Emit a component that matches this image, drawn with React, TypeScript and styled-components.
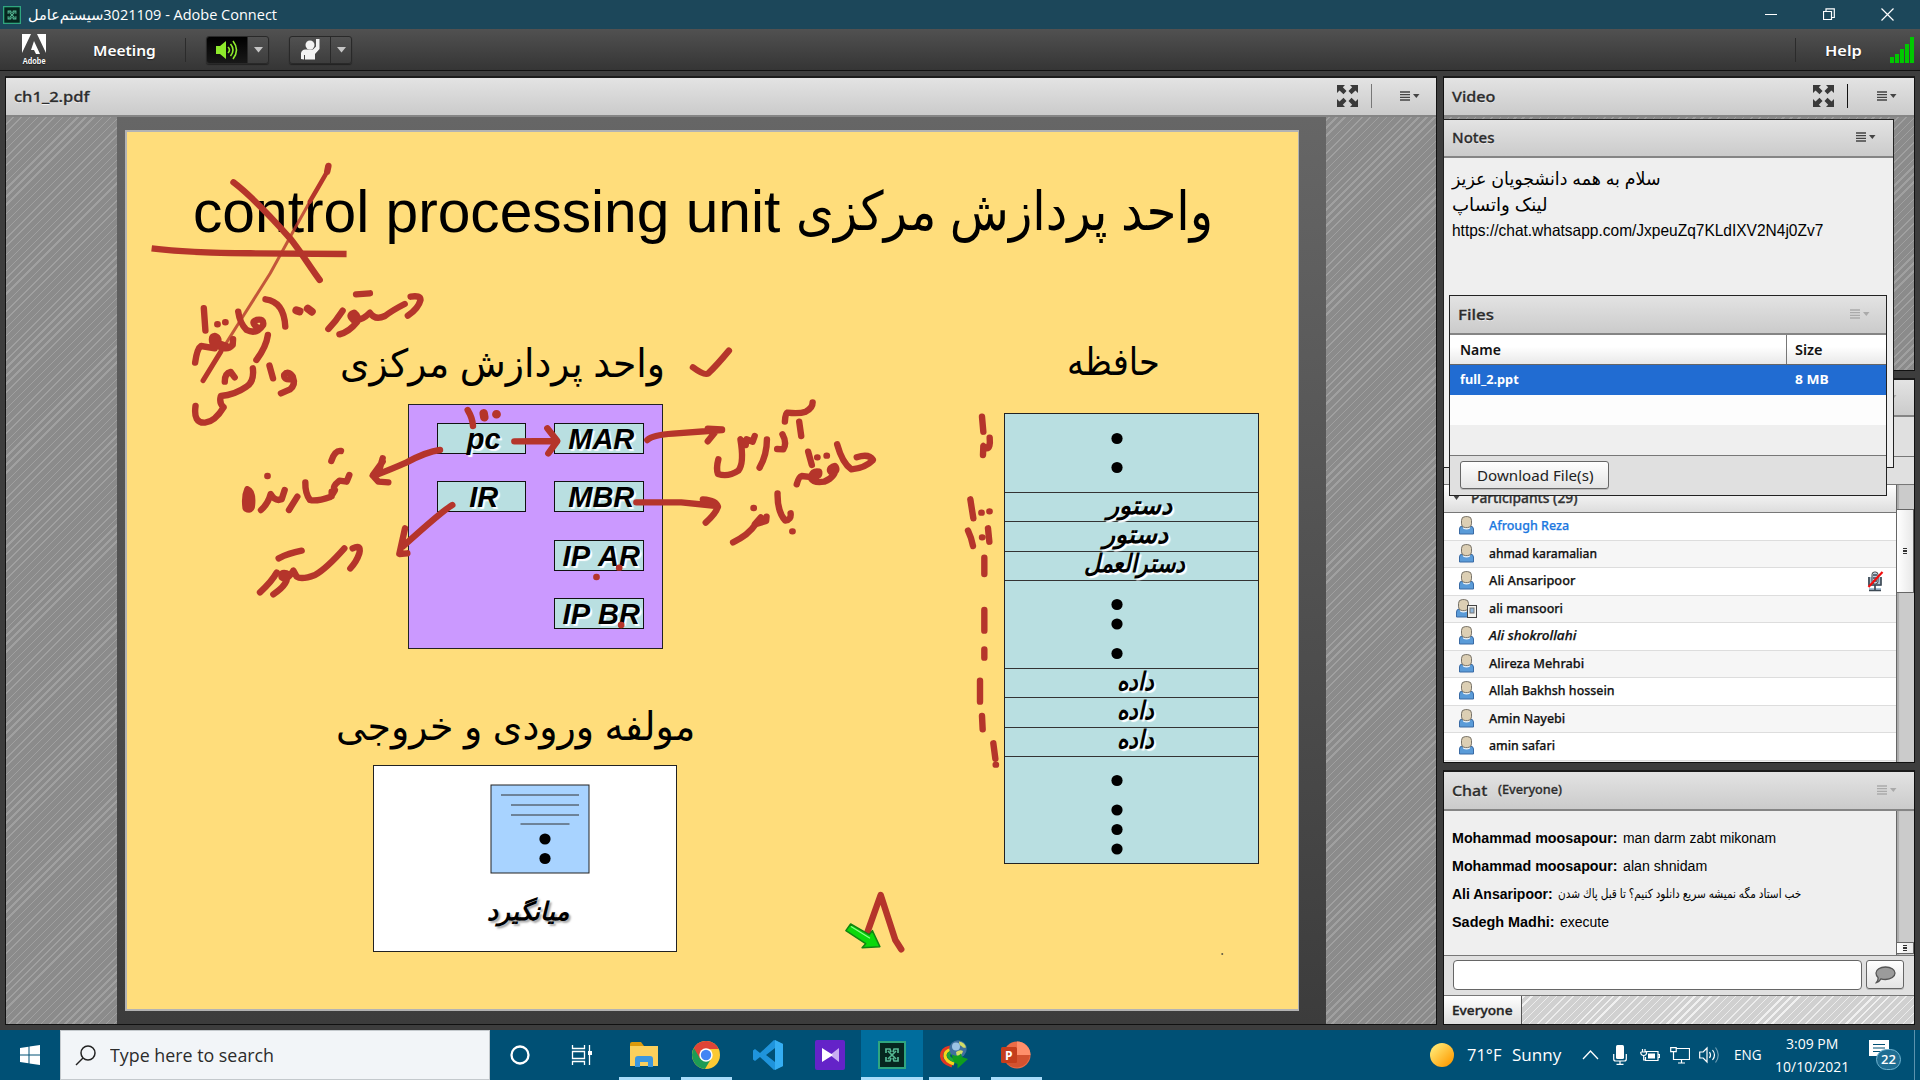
import React, { useLayoutEffect, useRef, useState } from "react";
import styled, { createGlobalStyle, css } from "styled-components";

const ui = `"Noto Sans", "Open Sans", "DejaVu Sans", sans-serif`;
const segoe = `"Open Sans", "Noto Sans", "DejaVu Sans", sans-serif`;
const arial = `"Liberation Sans", "DejaVu Sans", sans-serif`;

const GlobalStyle = createGlobalStyle`
  * { box-sizing: border-box; }
  body { margin: 0; overflow: hidden; background: #3d3d3d; font-family: ${ui}; }
  svg { display: block; flex: none; }
`;

/* ---------- text that fills a known measure ---------- */
const FitBox = styled.span<{ $w: number }>`
  display: block;
  flex: none;
  width: ${(p) => p.$w}px;
  white-space: nowrap;
`;
const FitInner = styled.span`
  display: inline-block;
  transform-origin: 0 50%;
  white-space: pre;
`;
function Fit({ w, children }: { w: number; children: React.ReactNode }) {
  const ref = useRef<HTMLSpanElement>(null);
  const [k, setK] = useState(1);
  useLayoutEffect(() => {
    if (ref.current) setK(w / ref.current.offsetWidth);
  }, [w]);
  return (
    <FitBox $w={w} dir="ltr">
      <FitInner ref={ref} style={{ transform: `scaleX(${k})` }}>
        {children}
      </FitInner>
    </FitBox>
  );
}

/* diagonal hatch: a run of thin lines, then a group of thick ones */
const hatch = (base: string, thin: string, thick: string) => {
  const parts: string[] = [];
  let at = 0;
  for (let i = 0; i < 11; i++) {
    const w = i > 7 ? 2 : 1;
    const gap = i > 7 ? 3.6 : 4.8;
    parts.push(`${base} ${at}px ${at + gap}px`);
    parts.push(`${i > 7 ? thick : thin} ${at + gap}px ${at + gap + w}px`);
    at += gap + w;
  }
  return `repeating-linear-gradient(135deg, ${parts.join(", ")})`;
};

/* ---------- shell ---------- */
const Screen = styled.div`
  width: 1920px;
  height: 1080px;
  display: flex;
  flex-direction: column;
  overflow: hidden;
  background: #3d3d3d;
`;
const TitleBar = styled.header`
  height: 29px;
  flex: none;
  display: flex;
  align-items: center;
  background: #1c475a;
  color: #fff;
  font: 14.5px/29px ${segoe};
  padding: 0 0 0 3px;
  gap: 7px;
`;
const WindowButtons = styled.div`
  margin-left: auto;
  display: flex;
  gap: 46px;
  padding-right: 26px;
  align-items: center;
`;
const Toolbar = styled.nav`
  height: 42px;
  flex: none;
  display: flex;
  align-items: center;
  background: linear-gradient(#515151, #353535);
  border-bottom: 1px solid #111;
  color: #fff;
  font: 600 15px/40px ${ui};
  padding: 0 6px 0 22px;
  text-shadow: 0 1px 1px #222;
`;
const Rule = styled.i<{ $ml?: number; $h?: number; $c?: string }>`
  width: 1px;
  flex: none;
  height: ${(p) => p.$h ?? 24}px;
  margin-left: ${(p) => p.$ml ?? 0}px;
  background: ${(p) => p.$c ?? "#2b2b2b"};
`;
const Space = styled.i<{ $w: number }>`
  flex: none;
  width: ${(p) => p.$w}px;
`;
const Spring = styled.i`
  flex: 1;
`;
const Split = styled.div<{ $on?: boolean }>`
  display: flex;
  width: 63px;
  height: 28px;
  border: 1px solid #292929;
  border-radius: 3px;
  background: linear-gradient(#515151, #3d3d3d);
  box-shadow: 0 1px 1px #222;
  overflow: hidden;
  & > span {
    display: flex;
    align-items: center;
    justify-content: center;
  }
  & > span:first-child {
    width: 41px;
    background: ${(p) => (p.$on ? "linear-gradient(#000, #181818)" : "none")};
    border-right: 1px solid #292929;
  }
  & > span:last-child {
    flex: 1;
  }
`;

const Workspace = styled.main`
  flex: 1;
  min-height: 0;
  display: flex;
  gap: 6px;
  padding: 5px 5px 5px 5px;
`;
const stripes = css`
  background: ${hatch("#8b8b8b", "#a0a0a0", "#a0a0a0")};
`;
const Panel = styled.section<{ $w?: number; $h?: number }>`
  ${(p) => (p.$w ? `width: ${p.$w}px;` : "")}
  ${(p) => (p.$h ? `height: ${p.$h}px;` : "")}
  flex: none;
  display: flex;
  flex-direction: column;
  border: 1px solid #111;
  border-top: 2px solid #1b1b1b;
  overflow: hidden;
`;
const Head = styled.div<{ $h?: number; $pr?: number }>`
  height: ${(p) => p.$h ?? 39}px;
  flex: none;
  display: flex;
  align-items: center;
  padding: 0 ${(p) => p.$pr ?? 15}px 2px 8px;
  background: linear-gradient(#e3e3e3, #cbcbcb);
  border-bottom: 2px solid #858585;
  color: #2c2c2c;
  font: 500 15px/24px ${ui};
  -webkit-text-stroke: 0.3px #2c2c2c;
  text-shadow: 0 1px 0 #f4f4f4;
`;
const Sub = styled.span`
  font-size: 12.5px;
`;
const Stage = styled.div`
  flex: 1;
  display: flex;
  justify-content: center;
  ${stripes}
`;
const Viewer = styled.div`
  width: 1209px;
  padding: 13px 0 0 8px;
  background: linear-gradient(#666, #3c3c3c);
`;
const Slide = styled.div`
  position: relative;
  width: 1174px;
  height: 881px;
  border: 2px solid #b3b3b3;
  border-right-width: 1px;
  background: #ffdd7b;
  overflow: hidden;
`;
/* slide canvas: coordinates run from the slide's inner corner */
const OX = 127;
const OY = 132;

const Label = styled.div<{ $x: number; $y: number; $s: number; $b?: boolean; $shadow?: string }>`
  position: absolute;
  left: ${(p) => p.$x - OX}px;
  top: ${(p) => p.$y - OY - p.$s * 0.8465}px;
  font: ${(p) => (p.$b ? "italic bold" : "normal")} ${(p) => p.$s}px/1 ${arial};
  color: #000;
  text-shadow: ${(p) => p.$shadow ?? "none"};
`;
const CpuBox = styled.div`
  position: absolute;
  left: ${408 - OX}px;
  top: ${403.5 - OY}px;
  width: 255px;
  height: 245px;
  padding: 18px 18px 0 28px;
  display: flex;
  justify-content: space-between;
  background: #cb99ff;
  border: 1px solid #222;
`;
const RegColumn = styled.div`
  display: flex;
  flex-direction: column;
  gap: 27.6px;
`;
const Register = styled.div`
  width: 89.5px;
  height: 31px;
  border: 1px solid #111;
  background: #b9dfe1;
  display: flex;
  justify-content: center;
  font: italic bold 29px/30px ${arial};
  text-shadow: 2px 2px 1px #fff;
  padding-left: 5px;
`;
const Memory = styled.div`
  position: absolute;
  left: ${1004 - OX}px;
  top: ${413 - OY}px;
  width: 255.5px;
  height: 451px;
  display: flex;
  flex-direction: column;
  border: 1px solid #222;
  background: #b9dfe1;
`;
const Cell = styled.div<{ $h: number }>`
  height: ${(p) => p.$h}px;
  flex: none;
  border-bottom: 1px solid #333;
  &:last-child {
    border-bottom: 0;
  }
`;
const IoBox = styled.div`
  position: absolute;
  left: ${373.5 - OX}px;
  top: ${765 - OY}px;
  width: 304px;
  height: 187px;
  border: 1px solid #222;
  background: #fff;
`;
const Ink = styled.svg`
  position: absolute;
  inset: 0;
  fill: none;
  stroke: #b5352b;
  stroke-width: 6.4;
  stroke-linecap: round;
  stroke-linejoin: round;
  path {
    vector-effect: non-scaling-stroke;
  }
`;

/* ---------- right column ---------- */
const Side = styled.aside`
  position: relative;
  flex: 1;
  display: flex;
  flex-direction: column;
  gap: 7px;
`;
const Fill = styled.div`
  flex: 1;
  ${stripes}
`;
const Floating = styled.div<{ $x: number; $y: number; $w: number; $h: number }>`
  position: absolute;
  left: ${(p) => p.$x}px;
  top: ${(p) => p.$y}px;
  width: ${(p) => p.$w}px;
  height: ${(p) => p.$h}px;
  display: flex;
  flex-direction: column;
  border: 1px solid #222;
  background: #efefef;
`;
const NoteText = styled.div`
  padding: 8px 8px;
  color: #000;
  font: 18px/26px ${arial};
  & > :last-child {
    font-size: 16.5px;
    line-height: 25px;
  }
`;
const FileHead = styled.div`
  display: flex;
  height: 30px;
  flex: none;
  background: linear-gradient(#fff 40%, #e9e9e9);
  border-bottom: 1px solid #666;
  font: 600 14px/29px ${ui};
  color: #111;
`;
const FileRow = styled.div<{ $bg: string }>`
  display: flex;
  height: 30px;
  flex: none;
  background: ${(p) => p.$bg};
  color: #fff;
  font: bold 13px/28px ${ui};
`;
const NameCol = styled.div`
  width: 337px;
  padding-left: 10px;
  border-right: 1px solid #777;
  ${FileRow} & {
    border-color: transparent;
  }
`;
const SizeCol = styled.div`
  padding-left: 8px;
`;
const FileFoot = styled.div`
  flex: 1;
  display: flex;
  padding: 5px 0 0 10px;
  background: #e0e0e0;
  border-top: 1px solid #777;
`;
const Button = styled.div<{ $w: number; $h: number }>`
  width: ${(p) => p.$w}px;
  height: ${(p) => p.$h}px;
  flex: none;
  border: 1px solid #666;
  border-radius: 3px;
  background: linear-gradient(#fff, #e4e4e4);
  box-shadow: 0 1px 0 #bbb;
  display: flex;
  align-items: center;
  justify-content: center;
  font: 15px/26px ${ui};
  color: #222;
`;
const Body = styled.div`
  flex: 1;
  min-height: 0;
  display: flex;
  background: #efefef;
`;
const Main = styled.div`
  width: 452px;
  flex: none;
`;
const Scroll = styled.div<{ $pt: number }>`
  flex: 1;
  padding-top: ${(p) => p.$pt}px;
  background: #cbcbcb;
  border-left: 1px solid #666;
  box-shadow: inset 2px 0 1px #aaa;
`;
const Thumb = styled.div<{ $h: number }>`
  height: ${(p) => p.$h}px;
  background: linear-gradient(90deg, #fff, #e8e8e8);
  border: 1px solid #666;
  border-left: 0;
  display: flex;
  flex-direction: column;
  gap: 1px;
  align-items: center;
  justify-content: center;
  i {
    width: 4px;
    height: 1.5px;
    background: #333;
  }
`;
const Status = styled.div<{ $h: number }>`
  height: ${(p) => p.$h}px;
  flex: none;
  background: #e0e0e0;
  border-bottom: 1px solid #777;
`;
const GroupHead = styled.div`
  height: 28px;
  display: flex;
  align-items: center;
  gap: 11px;
  padding: 0 0 2px 9px;
  background: linear-gradient(#fff, #ddd);
  border-bottom: 1px solid #777;
  font: 500 13.5px/24px ${ui};
  -webkit-text-stroke: 0.3px #333;
  color: #333;
`;
const Person = styled.div<{ $alt: boolean; $self?: boolean; $it?: boolean }>`
  height: 27.5px;
  display: flex;
  align-items: center;
  padding: 0 12px 0 12px;
  border-bottom: 1px solid #ddd;
  background: ${(p) => (p.$alt ? "#f6f6f6" : "#fff")};
  color: ${(p) => (p.$self ? "#1c78e0" : "#111")};
  font: ${(p) => (p.$it ? "italic" : "normal")} 500 12.5px/26px ${ui};
  -webkit-text-stroke: 0.25px currentColor;
  & > svg {
    margin-left: auto;
  }
`;
const Avatar = styled.span`
  width: 33px;
  flex: none;
`;
const Message = styled.p`
  margin: 0;
  height: 28px;
  display: flex;
  gap: 5px;
  font: 14px/28px ${arial};
  color: #000;
`;
const Small = styled.span`
  font-size: 12.5px;
`;
const Messages = styled.div`
  width: 452px;
  flex: none;
  padding: 13px 0 0 8px;
`;
const Compose = styled.div`
  height: 40px;
  flex: none;
  display: flex;
  gap: 4px;
  padding: 4px 0 0 9px;
  background: #e0e0e0;
  border-top: 1px solid #777;
`;
const Field = styled.div`
  width: 409px;
  height: 30px;
  border: 1px solid #666;
  border-radius: 4px;
  background: #fff;
`;
const Tabs = styled.div`
  height: 29px;
  flex: none;
  display: flex;
  border-top: 1px solid #777;
  background: ${hatch("#d0d0d0", "#ececec", "#f0f0f0")};
`;
const Tab = styled.div`
  width: 78px;
  padding-left: 8px;
  background: linear-gradient(#fff, #ddd);
  border-right: 1px solid #555;
  font: 500 13px/28px ${ui};
  -webkit-text-stroke: 0.35px #222;
  color: #222;
`;

/* ---------- taskbar ---------- */
const Taskbar = styled.footer`
  height: 50px;
  flex: none;
  display: flex;
  align-items: stretch;
  background: #005075;
  color: #fff;
  font: 16px/50px ${segoe};
`;
const Start = styled.div`
  width: 60px;
  display: flex;
  align-items: center;
  justify-content: center;
`;
const Search = styled.div`
  width: 430px;
  display: flex;
  align-items: center;
  gap: 14px;
  padding-left: 14px;
  background: #f2f5f8;
  border: 1px solid #c4c9cd;
  color: #2b2b2b;
  font: 17.5px/46px ${segoe};
`;
const Apps = styled.div`
  display: flex;
  margin-left: -1px;
`;
const TaskApp = styled.div<{ $open?: boolean; $active?: boolean }>`
  width: 62px;
  display: flex;
  align-items: center;
  justify-content: center;
  position: relative;
  background: ${(p) => (p.$active ? "#006d9d" : "none")};
  &::after {
    content: "";
    position: absolute;
    bottom: 0;
    left: ${(p) => (p.$active ? 0 : 6)}px;
    right: ${(p) => (p.$active ? 0 : 5)}px;
    height: ${(p) => (p.$open ? 3 : 0)}px;
    background: #a8dcfa;
  }
`;
const Tray = styled.div`
  margin-left: auto;
  display: flex;
  align-items: center;
  width: 490px;
`;
const Lang = styled.span`
  font-size: 14px;
`;
const Clock = styled.div`
  display: flex;
  flex-direction: column;
  align-items: center;
  width: 74px;
  font: 14px/23px ${segoe};
`;
const Notice = styled.div`
  position: relative;
  width: 34px;
  height: 30px;
`;
const Badge = styled.b`
  position: absolute;
  left: 7px;
  top: 9px;
  width: 25px;
  height: 21px;
  border: 1px solid #6fb4d2;
  border-radius: 11px;
  background: #1f6d92;
  font: 600 13px/18px ${segoe};
  text-align: center;
`;

/* ---------- icons ---------- */
const ConnectIcon = ({ s }: { s: number }) => (
  <svg width={s} height={s} viewBox="0 0 28 28">
    <rect x="1" y="1" width="26" height="26" fill="#06261f" stroke="#2fa67f" strokeWidth="2" />
    <g fill="none" stroke="#55b894" strokeWidth="1.7">
      <path d="M10 10l8 8M18 10l-8 8" />
      <path d="M8 12V8h4l1 3M20 12V8h-4l-1 3M8 16v4h4l1-3M20 16v4h-4l-1-3" />
    </g>
  </svg>
);
const Caret = () => (
  <svg width="9" height="6">
    <path d="M0 0h9L4.5 5.5z" fill="#c6c6c6" />
  </svg>
);
const MenuIcon = ({ dim }: { dim?: boolean }) => (
  <svg width="20" height="10" viewBox="0 0 20 10">
    <path d="M0 1h10M0 3.700h10M0 6.400h10M0 9h10" stroke={dim ? "#aaa" : "#444"} strokeWidth="1.3" />
    <path d="M13 3h6.500l-3.200 4z" fill={dim ? "#aaa" : "#444"} />
  </svg>
);
const Corner = "M0 0H8L5.800 2.200L9.500 6L6.500 9.300L2.500 5.500L0 8Z";
const ExpandIcon = () => (
  <svg width="21" height="22" viewBox="0 0 21 22">
    <g fill="#3a3a3a">
      <path d={Corner} />
      <path d={Corner} transform="translate(21 0) scale(-1 1)" />
      <path d={Corner} transform="translate(0 22) scale(1 -1)" />
      <path d={Corner} transform="translate(21 22) scale(-1 -1)" />
    </g>
  </svg>
);
const PersonIcon = ({ device }: { device?: boolean }) => (
  <svg width={device ? 23 : 20} height="20" viewBox={device ? "0 0 23 20" : "-3 0 20 20"}>
    <path d="M.5 18v-5q0-3 3-3h7q4 0 4 3v5z" fill="#5a9bd8" stroke="#3a6ba5" />
    <path d="M4 9.500h7v3q-3.500 2-7 0z" fill="#eef4fa" />
    <rect x="2.500" y="0.600" width="10" height="11" rx="3.800" fill="#dccfb4" stroke="#777268" />
    {device && (
      <g>
        <rect x="11.500" y="6.500" width="9" height="12" fill="#f2f2ee" stroke="#444" />
        <rect x="14" y="9" width="4" height="5" fill="#8fb6da" stroke="#777" />
      </g>
    )}
  </svg>
);
const MicOff = () => (
  <svg width="17" height="21" viewBox="0 0 17 21">
    <path d="M1 6h13v9H1zM2 17h12v3H2z" fill="#a9c2d6" />
    <rect x="5" y="1" width="6" height="12" rx="2.500" fill="#c2d3e0" stroke="#444" />
    <path d="M2 6v8h12V6M8 14v5M2 19.500h12M6 4h4M6 7h4M6 10h4" fill="none" stroke="#3e4a55" strokeWidth="1.700" />
    <path d="M1.500 16L15.500 1" stroke="#f20d0d" strokeWidth="2.200" />
  </svg>
);

const people: { n: string; w: number; self?: boolean; it?: boolean; dev?: boolean; mute?: boolean }[] = [
  { n: "Afrough Reza", w: 80, self: true },
  { n: "ahmad karamalian", w: 108 },
  { n: "Ali Ansaripoor", w: 86, mute: true },
  { n: "ali mansoori", w: 74, dev: true },
  { n: "Ali shokrollahi", w: 87, it: true },
  { n: "Alireza Mehrabi", w: 95 },
  { n: "Allah Bakhsh hossein", w: 126 },
  { n: "Amin Nayebi", w: 76 },
  { n: "amin safari", w: 66 },
];
const white = "2px 2px 1px #fff";
const memoryDots = [438.5, 467.5, 604.5, 624, 653.5, 780.5, 810, 829.5, 849];

const SlideInk = () => (
  <Ink width="1171" height="877" viewBox={`${OX} ${OY} 1171 877`}>
    <g transform="translate(120 130) scale(.3954 .3333)">
      <path d="M287 157C340 205 400 285 430 325C460 370 480 410 505 450" />
      <path d="M527 108L524 125" />
      <path d="M524 125Q505 165 480 215" strokeWidth="4.500" />
      <path d="M480 215L440 300L380 430L300 580L255 665" strokeWidth="3" opacity=".8" />
      <path d="M255 665L210 752" strokeWidth="5" />
      <path d="M80 355Q170 368 330 370L573 372" strokeLinecap="butt" />
      <path d="M735 500Q760 495 760 510Q755 535 728 557" />
      <path d="M720 522Q690 540 670 558Q645 572 632 548Q610 575 590 570Q575 555 592 548Q605 560 600 575Q580 605 555 613" />
      <path d="M563 542Q545 575 527 597M597 493L632 490" />
      <path d="M368 508Q415 515 418 590M212 535L216 602" />
      <path d="M446 541l8 3M475 536l10 9" strokeWidth="8" />
      <path d="M246 583h1M266 577h1" />
      <path d="M299 545Q303 580 320 600Q345 615 362 585Q365 565 345 570Q330 575 345 590" />
      <path d="M374 615Q370 650 345 690" />
      <path d="M190 698Q195 655 205 648L240 655Q225 620 240 618Q255 625 245 645Q270 665 285 645L286 628M238 625V650M250 640L270 648" />
      <path d="M431 748Q415 750 415 735Q425 720 437 740Q445 765 430 778L407 790M378 707L387 745" />
      <path d="M336 715Q340 755 320 770Q290 795 255 798Q250 820 262 832Q240 875 215 878Q185 880 191 828M265 755Q265 730 280 726L290 742" />
      <path d="M1449 712Q1478 738 1488 730Q1510 705 1540 662" />
    </g>
    <g transform="translate(220 390) scale(.33333)">
      <path d="M743 60Q758 85 759 108" />
      <path d="M791 70L793 82M829 73h1" strokeWidth="8.500" />
      <path d="M883 154L1010 153M982 115L1012 153L985 190" />
      <path d="M660 180Q620 185 560 217Q520 235 460 258M488 205L475 250M488 215L458 256L475 275L505 277" />
      <path d="M363 183Q345 180 334 213M142 258h1" />
      <path d="M388 255L380 275L358 272Q335 290 345 300L333 320Q290 335 270 330Q255 310 256 277M335 305V318" />
      <path d="M232 320L207 360M194 300L185 328Q165 335 152 312Q145 340 123 360" />
      <path d="M82 298Q72 320 77 355Q95 365 96 345Q100 305 82 298M84 310V350" />
      <path d="M697 345Q670 360 548 470M555 415L538 492L562 490" />
      <path d="M398 475Q425 462 418 490Q410 515 391 535" />
      <path d="M373 475Q320 535 285 555Q245 570 230 560L220 542Q200 575 185 562Q180 545 200 550Q210 580 160 613" />
      <path d="M170 548Q155 575 120 607M176 505Q205 490 245 482" />
      <path d="M1197 533h1M1129 561h1M1203 705h1" />
    </g>
    <g transform="translate(620 340) scale(.40816 .33333)">
      <path d="M67 300Q80 285 130 281L250 270M250 268L215 266M232 278L215 304" />
      <path d="M40 487L150 487L238 498M203 478Q235 480 240 500Q235 520 210 548M205 485L235 492" />
      <path d="M404 245Q405 220 410 218Q440 222 455 215Q472 205 472 187M439 245L444 288" />
      <path d="M398 283Q410 310 400 328L385 327M360 298Q360 345 342 383" />
      <path d="M330 288L325 305L310 298L308 315L295 298Q305 370 290 392Q265 412 240 402Q235 385 241 358" />
      <path d="M580 352Q610 340 620 360Q600 385 567 388Q545 370 532 313" />
      <path d="M526 378Q508 385 518 398Q535 395 528 380Q530 410 500 425Q475 430 468 415Q470 390 488 395Q490 410 475 412L445 408Q438 410 433 433" />
      <path d="M461 335L470 375M483 352h1M506 347h1" />
      <path d="M386 460Q385 515 405 542Q420 540 418 520M422 574h1M327 504h1" />
      <path d="M359 530L358 543L330 553L345 532L348 545M332 553Q315 585 277 607" />
    </g>
    <g transform="translate(960 400) scale(.33333)">
      <path d="M66 50L70 95M89 113Q92 145 80 145L70 138L69 165" />
      <path d="M31 298L40 355M64 338h1M88 334h1M24 392Q35 415 39 438M66 412h1M84 385L88 425" />
      <path d="M73 473V522M73 630V692M73 748V773M60 842V905M66 948L68 988M100 1030L106 1076M107 1094h1" />
    </g>
    <g transform="translate(320 690) scale(.3954 .33333)">
      <path d="M1385 725L1418 615L1455 750L1470 778" />
      <path
        d="M1342 702L1389 734L1397 722L1416 770L1371 773L1380 761L1330 722Z"
        fill="#0bd80b"
        stroke="#118411"
        strokeWidth="1.500"
      />
      <path d="M1344 710L1390 744" stroke="#8dff8d" strokeWidth="1.200" />
    </g>
    <path d="M1222 954h.5" stroke="#333" strokeWidth="1.500" />
  </Ink>
);

export default function App() {
  return (
    <Screen>
      <GlobalStyle />
      <TitleBar>
        <ConnectIcon s={18} />
        <Fit w={249}>{"سیستم‌عامل\u200e3021109 - Adobe Connect"}</Fit>
        <WindowButtons>
          <svg width="12" height="12"><path d="M0 5.500h12" stroke="#fff" /></svg>
          <svg width="12" height="13">
            <path d="M.5 3.500h8v8h-8zM3 3V.8h8.300v8.700H9" fill="none" stroke="#fff" strokeWidth="1.200" />
          </svg>
          <svg width="13" height="13"><path d="M.5.5l12 12M12.500.5l-12 12" stroke="#fff" strokeWidth="1.200" /></svg>
        </WindowButtons>
      </TitleBar>

      <Toolbar>
        <svg width="24" height="33" viewBox="0 0 24 33" overflow="visible">
          <path d="M0 1h9L0 20zM15 1h9v19zM12 8l6 13h-4l-2-4H9z" fill="#fff" />
          <text x="0.500" y="31" fill="#fff" fontFamily="Liberation Sans" fontWeight="bold" fontSize="8.500" textLength="23" lengthAdjust="spacingAndGlyphs">Adobe</text>
        </svg>
        <Space $w={47} />
        <Fit w={63}>Meeting</Fit>
        <Rule $ml={29} />
        <Space $w={20} />
        <Split $on>
          <span>
            <svg width="22" height="20" viewBox="0 0 22 20">
              <path d="M0 6h4l6-5v18l-6-5H0z" fill="#8eea2c" />
              <path d="M12 7q3 3 0 6M14.500 4q5 6 0 12M17 1q7 9 0 18" fill="none" stroke="#8eea2c" strokeWidth="1.600" />
            </svg>
          </span>
          <span><Caret /></span>
        </Split>
        <Space $w={20} />
        <Split>
          <span>
            <svg width="19" height="21" viewBox="0 0 19 21">
              <circle cx="9" cy="6" r="4.500" fill="#f2f2f2" />
              <path d="M0 20v-6q1-4 5-3.500h7l3-3V0h3.500v10L14 15v5.500H4V16H3v4.500z" fill="#f2f2f2" />
            </svg>
          </span>
          <span><Caret /></span>
        </Split>
        <Spring />
        <Rule />
        <Space $w={29} />
        <Fit w={37}>Help</Fit>
        <Space $w={28} />
        <svg width="24" height="26">
          <path d="M0 20h4v6H0zM5 17h4v9H5zM10 12h4v14h-4zM15 7h4v19h-4zM20 0h4v26h-4z" fill="#00c800" />
        </svg>
      </Toolbar>

      <Workspace>
        <Panel $w={1432}>
          <Head $pr={16}>
            <Fit w={75}>ch1_2.pdf</Fit>
            <Spring />
            <ExpandIcon />
            <Rule $ml={13} $c="#777" />
            <Space $w={28} />
            <MenuIcon />
          </Head>
          <Stage>
            <Viewer>
              <Slide>
                <Label $x={193} $y={232.5} $s={60}><Fit w={587}>control processing unit</Fit></Label>
                <Label $x={796} $y={229.5} $s={54}><Fit w={417}>واحد پردازش مرکزی</Fit></Label>
                <Label $x={340} $y={377} $s={39}><Fit w={325}>واحد پردازش مرکزی</Fit></Label>
                <Label $x={1067} $y={375.5} $s={38}><Fit w={93}>حافظه</Fit></Label>
                <Label $x={336} $y={740} $s={39}><Fit w={359}>مولفه ورودی و خروجی</Fit></Label>
                <CpuBox>
                  <RegColumn>
                    <Register>pc</Register>
                    <Register>IR</Register>
                  </RegColumn>
                  <RegColumn>
                    <Register>MAR</Register>
                    <Register>MBR</Register>
                    <Register>IP&nbsp;AR</Register>
                    <Register>IP&nbsp;BR</Register>
                  </RegColumn>
                </CpuBox>
                <Memory>
                  {[79, 29, 29.5, 29.5, 88, 29, 29.5, 29.5, 106].map((h, i) => (
                    <Cell key={i} $h={h} />
                  ))}
                </Memory>
                <Label $b $x={1107} $y={514} $s={25} $shadow={white}><Fit w={65}>دستور</Fit></Label>
                <Label $b $x={1103} $y={543} $s={25} $shadow={white}><Fit w={65}>دستور</Fit></Label>
                <Label $b $x={1084} $y={572} $s={25} $shadow={white}><Fit w={101}>دسترالعمل</Fit></Label>
                <Label $b $x={1117} $y={690} $s={25} $shadow={white}><Fit w={37}>داده</Fit></Label>
                <Label $b $x={1117} $y={719} $s={25} $shadow={white}><Fit w={37}>داده</Fit></Label>
                <Label $b $x={1117} $y={748} $s={25} $shadow={white}><Fit w={37}>داده</Fit></Label>
                <IoBox>
                  <svg width="302" height="185" viewBox="374.500 766.500 302 185">
                    <rect x="491.500" y="785.500" width="98" height="88" fill="#a8d3ff" stroke="#222" />
                    <path d="M501.500 795.500h78M511.500 805.500h68M511.500 815.500h68M521 824.500h49" stroke="#333" />
                    <circle cx="545.500" cy="839.500" r="5.600" />
                    <circle cx="545.500" cy="859" r="5.600" />
                  </svg>
                </IoBox>
                <Label $b $x={487} $y={920} $s={25} $shadow="2px 2px 2px #aaa"><Fit w={82}>میانگیرد</Fit></Label>
                <Ink width="1171" height="877" viewBox={`${OX} ${OY} 1171 877`}>
                  {memoryDots.map((y) => (
                    <circle key={y} cx="1117" cy={y} r="5.600" fill="#000" stroke="none" />
                  ))}
                </Ink>
                <SlideInk />
              </Slide>
            </Viewer>
          </Stage>
        </Panel>

        <Side>
          <Panel $h={295}>
            <Head $pr={17}>
              <Fit w={43}>Video</Fit>
              <Spring />
              <ExpandIcon />
              <Rule $ml={13} $c="#111" />
              <Space $w={29} />
              <MenuIcon />
            </Head>
            <Fill />
          </Panel>

          <Panel $h={385}>
            <Head $h={37} $pr={17}>
              <Spring />
              <MenuIcon dim />
            </Head>
            <Status $h={40} />
            <Status $h={28} />
            <Body>
              <Main>
                <GroupHead>
                  <svg width="7" height="5"><path d="M0 0h7L3.500 5z" fill="#444" /></svg>
                  <Fit w={106}>Participants (29)</Fit>
                </GroupHead>
                {people.map((p, i) => (
                  <Person key={p.n} $alt={i % 2 === 1} $self={p.self} $it={p.it}>
                    <Avatar><PersonIcon device={p.dev} /></Avatar>
                    <Fit w={p.w}>{p.n}</Fit>
                    {p.mute && <MicOff />}
                  </Person>
                ))}
              </Main>
              <Scroll $pt={24}>
                <Thumb $h={84}><i /><i /><i /></Thumb>
              </Scroll>
            </Body>
          </Panel>

          <Panel $h={255}>
            <Head $pr={17}>
              <Fit w={35}>Chat</Fit>
              <Space $w={11} />
              <Sub><Fit w={64}>(Everyone)</Fit></Sub>
              <Spring />
              <MenuIcon dim />
            </Head>
            <Body>
              <Messages>
                <Message><b><Fit w={166}>Mohammad moosapour:</Fit></b><Fit w={153}>man darm zabt mikonam</Fit></Message>
                <Message><b><Fit w={166}>Mohammad moosapour:</Fit></b><Fit w={84}>alan shnidam</Fit></Message>
                <Message><b><Fit w={101}>Ali Ansaripoor:</Fit></b><Small><Fit w={243}>خب استاد مگه نمیشه سریع دانلود کنیم؟ تا قبل پاك شدن</Fit></Small></Message>
                <Message><b><Fit w={103}>Sadegh Madhi:</Fit></b><Fit w={49}>execute</Fit></Message>
              </Messages>
              <Scroll $pt={131}>
                <Thumb $h={12}><i /><i /><i /></Thumb>
              </Scroll>
            </Body>
            <Compose>
              <Field />
              <Button $w={38} $h={29}>
                <svg width="21" height="18" viewBox="0 0 21 18">
                  <path d="M10.500 1C16 1 20 3.500 20 7s-4 6.500-9.500 6.500q-3 0-4.500-.7Q4 16 1.500 16.500 3.500 14 3 11.500 1 9.500 1 7c0-3.500 4-6 9.500-6z" fill="#9b9b9b" stroke="#555" strokeWidth="1.300" />
                </svg>
              </Button>
            </Compose>
            <Tabs>
              <Tab><Fit w={60}>Everyone</Fit></Tab>
            </Tabs>
          </Panel>

          <Floating $x={0} $y={43} $w={451} $h={349}>
            <Head $h={38} $pr={17}>
              <Fit w={42}>Notes</Fit>
              <Spring />
              <MenuIcon />
            </Head>
            <NoteText>
              <Fit w={209}>سلام به همه دانشجویان عزیز</Fit>
              <Fit w={96}>لینک واتساپ</Fit>
              <Fit w={371}>https://chat.whatsapp.com/JxpeuZq7KLdIXV2N4j0Zv7</Fit>
            </NoteText>
          </Floating>

          <Floating $x={6} $y={219} $w={438} $h={201}>
            <Head $h={39} $pr={16}>
              <Fit w={36}>Files</Fit>
              <Spring />
              <MenuIcon dim />
            </Head>
            <FileHead>
              <NameCol><Fit w={41}>Name</Fit></NameCol>
              <SizeCol><Fit w={28}>Size</Fit></SizeCol>
            </FileHead>
            <FileRow $bg="#216cd2">
              <NameCol><Fit w={59}>full_2.ppt</Fit></NameCol>
              <SizeCol><Fit w={34}>8 MB</Fit></SizeCol>
            </FileRow>
            <FileRow $bg="#fdfdfd" />
            <FileRow $bg="#efefef" />
            <FileFoot>
              <Button $w={149} $h={28}><Fit w={116}>Download File(s)</Fit></Button>
            </FileFoot>
          </Floating>
        </Side>
      </Workspace>

      <Taskbar>
        <Start>
          <svg width="20" height="20"><path d="M0 3l8.500-1.200v7.700H0zM9.500 1.600L20 0v9.500H9.500zM0 10.500h8.500v7.700L0 17zM9.500 10.500H20V20L9.500 18.400z" fill="#fff" /></svg>
        </Start>
        <Search>
          <svg width="21" height="21"><circle cx="13" cy="8" r="7" fill="none" stroke="#222" strokeWidth="1.500" /><path d="M8 13l-7 7" stroke="#222" strokeWidth="1.500" /></svg>
          <Fit w={164}>Type here to search</Fit>
        </Search>
        <Apps>
          <TaskApp>
            <svg width="22" height="22"><circle cx="11" cy="11" r="8.500" fill="none" stroke="#fff" strokeWidth="2.300" /></svg>
          </TaskApp>
          <TaskApp>
            <svg width="22" height="20"><path d="M1.500 0v3.500h12V0M1.500 20v-3.500h12V20M1.500 6.500h12v7h-12zM18.500 0v20" fill="none" stroke="#fff" strokeWidth="1.300" /><path d="M17 6h4v4h-4z" fill="#fff" /></svg>
          </TaskApp>
          <TaskApp $open>
            <svg width="28" height="26" viewBox="0 0 28 26">
              <path d="M0 2q0-2 2-2h9l3 4H0z" fill="#dc9a0c" /><path d="M0 4h28v20H0z" fill="#fbd05c" />
              <path d="M5 25v-8q0-3 3-3h12q3 0 3 3v8h-5v-5h-8v5z" fill="#3c97de" />
            </svg>
          </TaskApp>
          <TaskApp $open>
            <svg width="28" height="28" viewBox="0 0 28 28">
              <circle cx="14" cy="14" r="14" fill="#fcc934" />
              <path d="M1.900 7A14 14 0 0 0 13 28l6.500-11L14 14z" fill="#1d9b55" />
              <path d="M1.900 7L8 17.500 14 8h12.600A14 14 0 0 0 1.900 7z" fill="#df4437" />
              <circle cx="14" cy="14" r="6.700" fill="#fff" /><circle cx="14" cy="14" r="5.200" fill="#4285f4" />
            </svg>
          </TaskApp>
          <TaskApp>
            <svg width="30" height="30" viewBox="0 0 30 30">
              <path d="M21 0l9 4v22l-9 4L7 17l-5 4-2-1.500V10.500L2 9l5 4zM22 8l-9 7 9 7z" fill="#1f94dc" fillRule="evenodd" />
              <path d="M22 0l8 4v22l-8 4z" fill="#35aef3" />
            </svg>
          </TaskApp>
          <TaskApp>
            <svg width="30" height="30"><rect width="30" height="30" rx="2" fill="#6423c8" /><path d="M24 8v14l-9-7z" fill="#c9aef2" /><path d="M7 8l11 7-11 7z" fill="#fff" /></svg>
          </TaskApp>
          <TaskApp $active $open><ConnectIcon s={28} /></TaskApp>
          <TaskApp $open>
            <svg width="30" height="30" viewBox="0 0 30 30">
              <g fill="none" strokeWidth="3.200">
                <path d="M11 7Q2 9 2.500 16T13 26" stroke="#e33622" />
                <path d="M12 9.500Q5.500 11 6 16T15 24" stroke="#f6d51b" />
                <path d="M13 12Q9 13 9.500 16T17 21.500" stroke="#1fa63a" />
              </g>
              <circle cx="19" cy="9" r="8.700" fill="#3f6f9e" />
              <circle cx="17" cy="6.500" r="4" fill="#9cc3e4" />
              <path d="M20 1.500q6 1 7 6-3 1-4-1-3-1-3-5zM17 12q4-3 7-1-1 4-5 6-2-2-2-5z" fill="#d3dc66" />
              <path d="M13 14.500q6 3 9-1l1 3.500 6 2-10.500 9.500V24q-5-1-5.500-9.500z" fill="#0f9d1e" />
            </svg>
          </TaskApp>
          <TaskApp $open>
            <svg width="30" height="28" viewBox="0 0 30 28">
              <circle cx="16" cy="14" r="13.500" fill="#ed6c47" /><path d="M16 .5A13.500 13.500 0 0 1 29.500 14H16z" fill="#ff8f6b" /><path d="M3 18a13.500 13.500 0 0 0 26-4H16z" fill="#d35230" />
              <rect x="0" y="6" width="16" height="16" rx="1.500" fill="#c43e1c" />
              <text x="4" y="18.500" fill="#fff" fontFamily="Open Sans" fontWeight="bold" fontSize="12">P</text>
            </svg>
          </TaskApp>
        </Apps>
        <Tray>
          <svg width="24" height="24">
            <defs><linearGradient id="sun" x1="0" y1="0" x2="1" y2="1"><stop offset="0.200" stopColor="#ffe169" /><stop offset="0.900" stopColor="#ff9a00" /></linearGradient></defs>
            <circle cx="12" cy="12" r="12" fill="url(#sun)" />
          </svg>
          <Space $w={13} />
          <Fit w={34}>71°F</Fit>
          <Space $w={11} />
          <Fit w={49}>Sunny</Fit>
          <Space $w={21} />
          <svg width="17" height="10"><path d="M1 9l7.500-8L16 9" fill="none" stroke="#fff" strokeWidth="1.300" /></svg>
          <Space $w={14} />
          <svg width="14" height="20"><rect x="3" y="0" width="8" height="14" rx="1.500" fill="#fff" /><path d="M.7 9v5q0 2 2 2h8.600q2 0 2-2V9M7 16v3M3.500 19.300h7" fill="none" stroke="#fff" strokeWidth="1.200" /></svg>
          <Space $w={13} />
          <svg width="20" height="15"><path d="M5.500 3.500H18v9H5.500V9M18 6.500h1.500v3H18M2.500 4V1M5 4V1M.7 4h6q0 3.500-3 3.500T.7 4M3.700 7.500V12h2" fill="none" stroke="#fff" strokeWidth="1.200" /><path d="M8 5.500h7v5H8z" fill="#fff" /></svg>
          <Space $w={10} />
          <svg width="20" height="17"><path d="M6 1.500h13.500v11H3.500V7M11.500 12.500V16M8 16h7M.7.7h5.500v4H.7zM3.500 5v3" fill="none" stroke="#fff" strokeWidth="1.200" /></svg>
          <Space $w={9} />
          <svg width="21" height="18"><path d="M.7 6h3.500L8 2v14l-3.800-4H.7z" fill="none" stroke="#fff" strokeWidth="1.200" /><path d="M10.500 6q2 3 0 6M13.500 4q4 5 0 10" fill="none" stroke="#fff" strokeWidth="1.200" /><path d="M16.500 1.500q5.500 7.500 0 15" fill="none" stroke="#6d9db5" strokeWidth="1.200" /></svg>
          <Space $w={14} />
          <Lang><Fit w={28}>ENG</Fit></Lang>
          <Space $w={13} />
          <Clock><Fit w={52}>3:09 PM</Fit><Fit w={74}>10/10/2021</Fit></Clock>
          <Space $w={20} />
          <Notice>
            <svg width="20" height="20"><path d="M0 0h20v16h-8l-4 4v-4H0z" fill="#fff" /><path d="M4 4.500h12M4 8h12M4 11.500h8" stroke="#005075" strokeWidth="1.200" /></svg>
            <Badge>22</Badge>
          </Notice>
          <Space $w={11} />
          <Rule $h={50} $c="#5c93ae" />
        </Tray>
      </Taskbar>
    </Screen>
  );
}
